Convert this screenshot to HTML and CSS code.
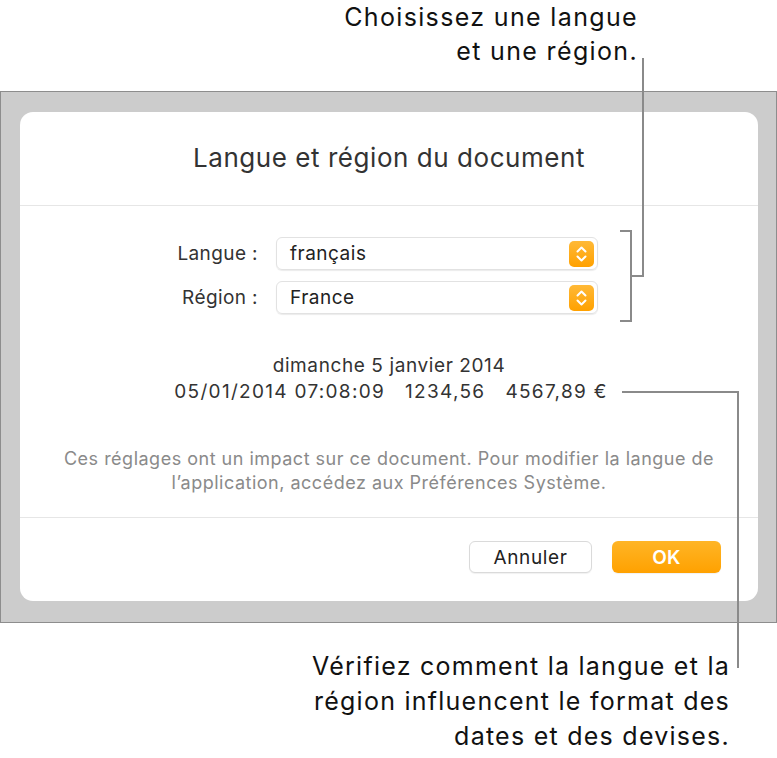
FILE: index.html
```html
<!DOCTYPE html>
<html lang="fr">
<head>
<meta charset="utf-8">
<title>Langue et région du document</title>
<link rel="stylesheet" href="styles.css">
</head>
<body>
<div class="page">
  <div class="note note-top">Choisissez une langue<br>et une région.</div>
  <div class="frame">
    <div class="dialog">
      <div class="dlg-head">Langue et région du document</div>
      <div class="dlg-body">
        <div class="form">
          <label class="lbl">Langue :</label>
          <div class="select"><span class="val">français</span>
            <svg class="stepper" width="25" height="26" viewBox="0 0 25 26"><defs><linearGradient id="g1" x1="0" y1="0" x2="0" y2="1"><stop offset="0" stop-color="#ffb937"/><stop offset="1" stop-color="#ffa100"/></linearGradient></defs><rect width="25" height="26" rx="5" fill="url(#g1)"/><path d="M8.5 10.5 L12.5 6.5 L16.5 10.5 M8.5 15.5 L12.5 19.5 L16.5 15.5" fill="none" stroke="#fff" stroke-width="2" stroke-linecap="round" stroke-linejoin="round"/></svg>
          </div>
          <label class="lbl">Région :</label>
          <div class="select"><span class="val">France</span>
            <svg class="stepper" width="25" height="26" viewBox="0 0 25 26"><defs><linearGradient id="g2" x1="0" y1="0" x2="0" y2="1"><stop offset="0" stop-color="#ffb937"/><stop offset="1" stop-color="#ffa100"/></linearGradient></defs><rect width="25" height="26" rx="5" fill="url(#g2)"/><path d="M8.5 10.5 L12.5 6.5 L16.5 10.5 M8.5 15.5 L12.5 19.5 L16.5 15.5" fill="none" stroke="#fff" stroke-width="2" stroke-linecap="round" stroke-linejoin="round"/></svg>
          </div>
        </div>
        <div class="sample">
          <div>dimanche 5 janvier 2014</div>
          <div class="nums"><span>05/01/2014 07:08:09</span><span class="gap">1234,56</span><span class="gap">4567,89 €</span></div>
        </div>
        <p class="hint">Ces réglages ont un impact sur ce document. Pour modifier la langue de<br>l’application, accédez aux Préférences Système.</p>
      </div>
      <div class="dlg-foot">
        <button class="btn">Annuler</button>
        <button class="btn ok">OK</button>
      </div>
    </div>
  </div>
  <div class="note note-bottom">Vérifiez comment la langue et la<br>région influencent le format des<br>dates et des devises.</div>
  <svg class="callouts" width="777" height="758" viewBox="0 0 777 758">
    <path d="M643 58 V276 H631 M620 231 H631 V321 H620 M622 392 H738 V668" fill="none" stroke="#8a8a8a" stroke-width="2"/>
  </svg>
</div>
</body>
</html>
```
FILE: styles.css
```css
* { box-sizing: border-box; }
html, body { margin: 0; padding: 0; background: #fff; }
body { font-family: Inter, "Helvetica Neue", "Liberation Sans", sans-serif; color: #222; }
.page { position: relative; width: 777px; height: 758px; overflow: hidden; }
.note { font-size: 25px; line-height: 34px; text-align: right; color: #111; letter-spacing: 1.35px; }
.note-top { padding-right: 139px; height: 91px; padding-top: 0; }
.note-bottom { padding-right: 47px; margin-top: 26px; line-height: 35px; letter-spacing: 1.25px; }
.frame { background: #cccccc; border: 1px solid #8d8d8d; padding: 20px 18px 21px 19px; }
.dialog { background: #fff; border-radius: 13px; }
.dlg-head { height: 94px; display: flex; align-items: center; justify-content: center; font-size: 26px; letter-spacing: 0.55px; color: #333; border-bottom: 1px solid #e6e6e6; padding-bottom: 2px; }
.dlg-body { padding: 31px 0 22px; }
.form { display: grid; grid-template-columns: 238px 322px; column-gap: 18px; row-gap: 11px; }
.lbl { text-align: right; font-size: 19px; letter-spacing: 0.4px; color: #333; align-self: center; }
.select { height: 33px; border-radius: 6px; border: 1px solid #e2e2e2; box-shadow: 0 1px 1px rgba(0,0,0,0.08); display: flex; align-items: center; justify-content: space-between; padding: 0 3px 0 13px; font-size: 19px; letter-spacing: 0.5px; color: #222; }
.stepper { display: block; }
.sample { margin-top: 39px; text-align: center; font-size: 19px; letter-spacing: 0.6px; line-height: 26px; color: #333; }
.nums { letter-spacing: 1.3px; padding-left: 4px; }
.gap { margin-left: 20px; }
.hint { margin: 42px 0 0; text-align: center; font-size: 18px; letter-spacing: 0.5px; line-height: 24px; color: #8a8a8a; }
.dlg-foot { border-top: 1px solid #e6e6e6; display: flex; justify-content: flex-end; gap: 20px; padding: 23px 37px 28px 0; }
.btn { font-family: inherit; height: 32px; border-radius: 6px; border: 1px solid #dadada; background: #fff; font-size: 19px; letter-spacing: 0.6px; color: #222; width: 123px; box-shadow: 0 1px 1px rgba(0,0,0,0.06); padding: 0; }
.btn.ok { width: 109px; border: none; background: linear-gradient(#ffb526, #ffa100); color: #fff; font-weight: 600; letter-spacing: 0.3px; }
.callouts { position: absolute; left: 0; top: 0; pointer-events: none; }
```
